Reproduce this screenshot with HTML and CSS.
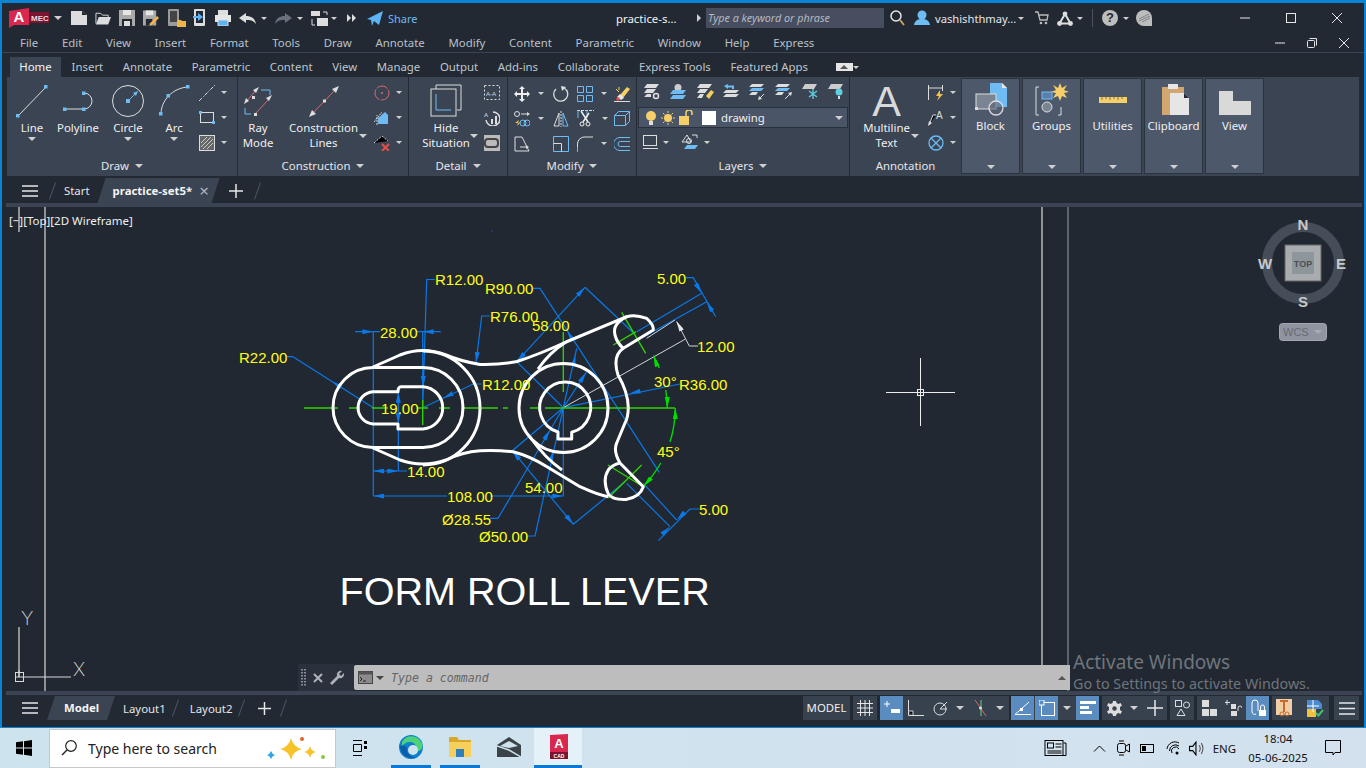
FILE: index.html
```html
<!DOCTYPE html>
<html>
  <head>
    <meta charset="utf-8">
    <title>practice-set5 - AutoCAD Mechanical</title>
    <link rel="stylesheet" href="styles.css">
  </head>
  <body>
    <div class="window">

      <!-- title bar -->
      <div class="titlebar">
        <div class="quick">
          <svg class="logo" width="40" height="20" viewBox="0 0 40 20"><path fill="#d9274f" d="M0 3 20 0V17H5L0 20z"/><rect x="20" y="4" width="20" height="11" fill="#7a1430"/><text x="10" y="14" class="logo-a">A</text><text x="22" y="12.500" class="logo-m">MEC</text></svg>
          <i class="caret caret-qa"></i>
          <svg width="16" height="14" viewBox="0 0 16 14"><path fill="#ddd" d="M0 0H11L16 4V14H0z"/><path fill="#222933" d="M11 0 16 4H11z"/></svg>
          <svg width="16" height="14" viewBox="0 0 17 14"><path fill="none" stroke="#ddd" d="M1 13V2H6L8 4H14V6"/><path fill="#ddd" d="M1 14 4 6H17L14 14z"/></svg>
          <svg width="16" height="16" viewBox="0 0 16 16"><path fill="#aaa" d="M0 0H16V16H0z"/><rect x="4" y="0" width="8" height="5" fill="#e6e6e6"/><rect x="3" y="9" width="10" height="7" fill="#222933"/><rect x="5" y="11" width="6" height="5" fill="#ddd"/></svg>
          <svg width="16" height="16" viewBox="0 0 17 16"><path fill="#aaa" d="M0 0H14V16H0z"/><rect x="3" y="0" width="8" height="5" fill="#e6e6e6"/><rect x="3" y="9" width="7" height="7" fill="#222933"/><path fill="#f0b24a" d="M7 14 15 6 17 8 9 16H7z"/></svg>
          <svg class="qa-phone" width="18" height="18" viewBox="0 0 18 18"><rect x="0" y="0" width="11" height="17" rx="1" fill="#9a9a9a"/><rect x="2" y="2" width="7" height="11" fill="#444"/><path fill="#f0b24a" d="M9 11H13L14 12H18V18H9z"/></svg>
          <svg class="qa-import" width="13" height="18" viewBox="0 0 13 18"><rect x="1" y="0" width="11" height="17" rx="1" fill="#ddd"/><rect x="3" y="2" width="7" height="12" fill="#222933"/><path fill="#5cb4f5" d="M0 7H5V4L10 8 5 12V9H0z"/></svg>
          <svg class="qa-print" width="16" height="16" viewBox="0 0 16 16"><rect x="3" y="0" width="10" height="5" fill="#ddd"/><rect x="0" y="5" width="16" height="7" fill="#e6e6e6"/><rect x="3" y="10" width="10" height="6" fill="#5cb4f5" stroke="#ddd"/></svg>
          <svg width="17" height="11" viewBox="0 0 17 11"><path fill="#ddd" d="M0 5 7 0V3C12 3 16 5 17 11 14 7 11 7 7 7V10z"/></svg>
          <i class="caret caret-sm caret-undo"></i>
          <svg width="17" height="11" viewBox="0 0 17 11"><path fill="#6a717c" d="M17 5 10 0V3C5 3 1 5 0 11 3 7 6 7 10 7V10z"/></svg>
          <i class="caret caret-sm caret-redo"></i>
          <svg width="17" height="15" viewBox="0 0 17 15"><rect x="0" y="0" width="9" height="5" fill="#ddd"/><rect x="6" y="7" width="11" height="8" fill="#ddd"/><path fill="none" stroke="#ddd" d="M12 1H16V4M1 8V14H4"/></svg>
          <i class="caret caret-sm caret-swap"></i>
          <svg class="qa-more" width="9" height="8" viewBox="0 0 9 8"><path fill="#ddd" d="M0 0 4 4 0 8zM5 0 9 4 5 8z"/></svg>
          <svg class="qa-share" width="16" height="15" viewBox="0 0 16 15"><path fill="#5cb4f5" d="M0 8 16 0 12 14 7 10 5 15 4 9z"/></svg>
          <span class="share">Share</span>
        </div>
        <span class="doc-name">practice-s...</span>
        <i class="arrow-right"></i>
        <div class="search-box">Type a keyword or phrase</div>
        <svg class="ti-search" width="15" height="16" viewBox="0 0 15 16"><circle cx="6" cy="6" r="5" fill="none" stroke="#e6e6e6" stroke-width="1.500"/><path stroke="#c9a35a" stroke-width="2" d="M10 10 14 15"/></svg>
        <svg class="ti-user" width="16" height="16" viewBox="0 0 16 16"><circle cx="8" cy="5" r="4.500" fill="#6fbcf5"/><path fill="#6fbcf5" d="M0 15C1 10 4 9 8 9S15 10 16 15z"/></svg>
        <span class="user">vashishthmay...</span>
        <i class="caret caret-sm"></i>
        <svg class="ti-cart" width="14" height="14" viewBox="0 0 14 14"><path fill="none" stroke="#bbb" stroke-width="1.300" d="M0 1H3L5 9H12L13 4H4"/><circle cx="6" cy="12" r="1.300" fill="#bbb"/><circle cx="11" cy="12" r="1.300" fill="#bbb"/></svg>
        <svg class="ti-a360" width="16" height="15" viewBox="0 0 16 15"><path fill="none" stroke="#ddd" stroke-width="2" d="M8 3 2.500 12.500H13.500z"/><circle cx="8" cy="3" r="2.400" fill="#ddd"/><circle cx="2.500" cy="12.500" r="2.400" fill="#ddd"/><circle cx="13.500" cy="12.500" r="2.400" fill="#ddd"/></svg>
        <i class="caret caret-sm"></i>
        <span class="title-sep"></span>
        <svg class="ti-help" width="16" height="16" viewBox="0 0 16 16"><circle cx="8" cy="8" r="8" fill="#bdbdbd"/><text x="8" y="12" class="help-q">?</text></svg>
        <i class="caret caret-sm"></i>
        <svg class="ti-stay" width="16" height="16" viewBox="0 0 16 16"><path fill="#bdbdbd" d="M8 0A8 8 0 0 1 16 8V16H8A8 8 0 0 1 8 0z"/><path stroke="#7d8389" fill="none" d="M3 9 13 4M3 11 14 6M6 12 14 8"/></svg>
        <div class="win-controls">
          <svg width="10" height="10" viewBox="0 0 10 10"><path stroke="#e6e6e6" d="M0 5H10"/></svg>
          <svg width="10" height="10" viewBox="0 0 10 10"><rect x=".5" y=".5" width="9" height="9" fill="none" stroke="#e6e6e6"/></svg>
          <svg width="10" height="10" viewBox="0 0 10 10"><path stroke="#e6e6e6" d="M0 0 10 10M10 0 0 10"/></svg>
        </div>
      </div>

      <!-- menu bar -->
      <div class="menubar">
        <span>File</span><span>Edit</span><span>View</span><span>Insert</span><span>Format</span><span>Tools</span><span>Draw</span><span>Annotate</span><span>Modify</span><span>Content</span><span>Parametric</span><span>Window</span><span>Help</span><span>Express</span>
        <div class="doc-controls">
          <svg width="10" height="10" viewBox="0 0 10 10"><path stroke="#e6e6e6" d="M0 5H10"/></svg>
          <svg width="10" height="10" viewBox="0 0 10 10"><rect x=".5" y="2.500" width="7" height="7" rx="1" fill="none" stroke="#e6e6e6"/><path fill="none" stroke="#e6e6e6" d="M2.500 .5H9.500V7.500"/></svg>
          <svg width="10" height="10" viewBox="0 0 10 10"><path stroke="#e6e6e6" d="M0 0 10 10M10 0 0 10"/></svg>
        </div>
      </div>

      <!-- ribbon tabs -->
      <div class="ribbon-tabs">
        <span class="tab-home">Home</span><span>Insert</span><span>Annotate</span><span>Parametric</span><span>Content</span><span>View</span><span>Manage</span><span>Output</span><span>Add-ins</span><span>Collaborate</span><span>Express Tools</span><span>Featured Apps</span>
        <span class="ribbon-min"><i class="caret-up"></i></span>
        <i class="caret caret-sm caret-min"></i>
      </div>

      <!-- ribbon -->
      <div class="ribbon">

        <div class="panel panel-draw">
          <div class="panel-body">
            <div class="big">
              <svg width="32" height="34" viewBox="0 0 32 34"><path stroke="#ddd" d="M2 32 30 3"/><rect x="0" y="30" width="3.500" height="3.500" fill="#6fbcf5"/><rect x="28" y="1" width="3.500" height="3.500" fill="#6fbcf5"/></svg>
              <span>Line</span><i class="caret"></i>
            </div>
            <div class="big">
              <svg width="34" height="34" viewBox="0 0 34 34"><path fill="none" stroke="#ddd" d="M4 25H23A8 8 0 0 0 23 9"/><rect x="2" y="23.500" width="3.500" height="3.500" fill="#6fbcf5"/><rect x="21" y="23.500" width="3.500" height="3.500" fill="#6fbcf5"/><rect x="21" y="7.500" width="3.500" height="3.500" fill="#6fbcf5"/></svg>
              <span>Polyline</span>
            </div>
            <div class="big">
              <svg width="34" height="34" viewBox="0 0 34 34"><circle cx="17" cy="17" r="15.500" fill="none" stroke="#ddd"/><path stroke="#6fbcf5" d="M17 17 25 9"/><path fill="#6fbcf5" d="M27 7 25 12 22 9z"/><rect x="15" y="15" width="4" height="4" fill="#6fbcf5"/></svg>
              <span>Circle</span><i class="caret"></i>
            </div>
            <div class="big">
              <svg width="32" height="34" viewBox="0 0 32 34"><path fill="none" stroke="#ddd" d="M3 30C3 17 14 4 30 3"/><rect x="1" y="28" width="3.500" height="3.500" fill="#6fbcf5"/><rect x="8.500" y="10" width="3.500" height="3.500" fill="#6fbcf5"/><rect x="28" y="1" width="3.500" height="3.500" fill="#6fbcf5"/></svg>
              <span>Arc</span><i class="caret"></i>
            </div>
            <div class="small-col">
              <div class="small"><svg width="16" height="16" viewBox="0 0 16 16"><path stroke="#ddd" stroke-dasharray="4 1.500 1 1.500" d="M0 16 16 0"/></svg><i class="caret caret-sm"></i></div>
              <div class="small"><svg width="16" height="13" viewBox="0 0 16 13"><rect x="1.500" y="1.500" width="13" height="10" fill="none" stroke="#ddd"/><rect x="0" y="0" width="3" height="3" fill="#6fbcf5"/><rect x="13" y="10" width="3" height="3" fill="#6fbcf5"/></svg><i class="caret caret-sm"></i></div>
              <div class="small"><svg width="16" height="16" viewBox="0 0 16 16"><rect x=".5" y=".5" width="15" height="15" fill="#666" stroke="#ddd"/><path stroke="#ccc" d="M2 8 8 2M2 12 12 2M4 14 14 4M8 14 14 8"/></svg><i class="caret caret-sm"></i></div>
            </div>
          </div>
          <div class="panel-title">Draw <i class="caret caret-title"></i></div>
        </div>

        <div class="panel panel-construction">
          <div class="panel-body">
            <div class="big">
              <svg width="30" height="34" viewBox="0 0 30 34"><path stroke="#d96a6a" d="M3 18 13 6M12 30 27 14"/><path fill="#ddd" d="M1 20 3 14 6 17zM16 3 10 6 13 9zM29 11 23 14 26 17z"/><rect x="9" y="12" width="3" height="3" fill="#ddd"/><rect x="11" y="29" width="3" height="3" fill="#ddd"/><path fill="none" stroke="#6fbcf5" d="M18 6H27V11M2 24V30H8"/></svg>
              <span>Ray<br>Mode</span>
            </div>
            <div class="big">
              <svg width="32" height="34" viewBox="0 0 32 34"><path stroke="#d96a6a" d="M3 31 30 3"/><path fill="#ddd" d="M31 2 24 5 28 9zM1 33 8 30 4 26z"/><rect x="15" y="15.500" width="3" height="3" fill="#ddd"/></svg>
              <span>Construction<br>Lines</span><i class="caret caret-side"></i>
            </div>
            <div class="small-col">
              <div class="small"><svg width="16" height="16" viewBox="0 0 16 16"><circle cx="8" cy="8" r="7" fill="none" stroke="#d96a6a" stroke-dasharray="12 1.500"/><circle cx="8" cy="8" r="1" fill="#d96a6a"/></svg><i class="caret caret-sm"></i></div>
              <div class="small"><svg width="16" height="16" viewBox="0 0 16 16"><path fill="#6fbcf5" d="M4 8 11 2 14 5V14H4z"/><path stroke="#ddd" stroke-dasharray="2 1" d="M0 12 8 2M3 15 3 5"/></svg><i class="caret caret-sm"></i></div>
              <div class="small"><svg width="16" height="16" viewBox="0 0 16 16"><path stroke="#ddd" stroke-dasharray="2 1.500" d="M0 8 8 1 14 6"/><path stroke="#e0504a" stroke-width="2" d="M8 9 15 16M15 9 8 16"/></svg><i class="caret caret-sm"></i></div>
            </div>
          </div>
          <div class="panel-title">Construction <i class="caret caret-title"></i></div>
        </div>

        <div class="panel panel-detail">
          <div class="panel-body">
            <div class="big">
              <svg width="32" height="34" viewBox="0 0 32 34"><path fill="none" stroke="#ddd" d="M6 5V1H31V26H27"/><rect x="1" y="5" width="25" height="27" fill="none" stroke="#ddd"/><path fill="none" stroke="#6fbcf5" d="M6 10V26H21"/></svg>
              <span>Hide<br>Situation</span><i class="caret caret-side"></i>
            </div>
            <div class="small-col">
              <div class="small"><svg width="16" height="15" viewBox="0 0 16 15"><rect x=".5" y=".5" width="15" height="14" fill="none" stroke="#ddd" stroke-dasharray="2 2"/><text x="2" y="11" class="ic-text">A-A</text></svg></div>
              <div class="small"><svg width="16" height="16" viewBox="0 0 16 16"><path fill="none" stroke="#ddd" stroke-width="1.500" d="M2 10A7 7 0 1 0 9 2"/><text x="0" y="7" class="ic-text">A</text><rect x="7" y="9" width="2" height="5" fill="#ddd"/><rect x="11" y="6" width="2" height="8" fill="#ddd"/></svg></div>
              <div class="small"><svg width="16" height="16" viewBox="0 0 16 16"><rect width="16" height="16" fill="#bbb"/><rect x="1" y="4" width="13" height="8" rx="3" fill="none" stroke="#444" stroke-width="2"/></svg></div>
            </div>
          </div>
          <div class="panel-title">Detail <i class="caret caret-title"></i></div>
        </div>

        <div class="panel panel-modify">
          <div class="panel-body tool-grid">
            <div class="cell"><svg width="16" height="16" viewBox="0 0 16 16"><path fill="#eee" d="M8 0 11 3H9V7H13V5L16 8 13 11V9H9V13H11L8 16 5 13H7V9H3V11L0 8 3 5V7H7V3H5z"/></svg><i class="caret caret-sm"></i></div>
            <div class="cell"><svg width="16" height="16" viewBox="0 0 16 16"><path fill="none" stroke="#ddd" stroke-width="1.300" d="M11 2A7 7 0 1 1 3 3"/><path fill="#ddd" d="M8 0 13 1 9 5z"/></svg></div>
            <div class="cell"><svg width="16" height="16" viewBox="0 0 16 16"><path fill="none" stroke="#6fbcf5" d="M.5 .5H6.500V6.500H.5zM9.500 .5H15.500V6.500H9.500zM.5 9.500H6.500V15.500H.5zM9.500 9.500H15.500V15.500H9.500z"/></svg><i class="caret caret-sm"></i></div>
            <div class="cell"><svg width="16" height="16" viewBox="0 0 16 16"><path stroke="#ddd" d="M0 15.500H16"/><path fill="#f5d060" d="M6 9 13 1 16 3 9 12z"/><path fill="#e8e8e8" d="M3 11 6 8 10 12 7 14z"/><circle cx="4" cy="13" r="1.800" fill="#e0504a"/><path stroke="#f5d060" d="M2 3 5 6M5 1 5 4"/></svg></div>

            <div class="cell"><svg width="16" height="16" viewBox="0 0 16 16"><circle cx="3" cy="3" r="2.500" fill="none" stroke="#ddd"/><path stroke="#ddd" d="M7 3H13"/><path fill="#ddd" d="M13 1 16 3 13 5z"/><path fill="#f5c04a" d="M1 12 5 9 4 12 7 11 3 15 4 12z"/><circle cx="9" cy="12" r="3" fill="none" stroke="#6fbcf5"/><circle cx="13" cy="12" r="3" fill="none" stroke="#6fbcf5"/></svg><i class="caret caret-sm"></i></div>
            <div class="cell"><svg width="16" height="16" viewBox="0 0 16 16"><path fill="none" stroke="#ddd" d="M6 2 1 15H6z"/><path fill="none" stroke="#6fbcf5" d="M10 2 15 15H10z"/><path stroke="#ddd" stroke-dasharray="2 1" d="M8 0V16"/></svg></div>
            <div class="cell"><svg width="17" height="17" viewBox="0 0 17 17"><path stroke="#ddd" stroke-dasharray="3 1" d="M0 .5H17"/><path stroke="#6fbcf5" d="M1 0V8M10 0V8"/><path stroke="#eee" stroke-width="1.500" d="M4 1 11 12M12 3 6 12"/><circle cx="5" cy="14" r="2" fill="none" stroke="#eee"/><circle cx="11" cy="14" r="2" fill="none" stroke="#eee"/></svg><i class="caret caret-sm"></i></div>
            <div class="cell"><svg width="16" height="15" viewBox="0 0 16 15"><path fill="none" stroke="#6fbcf5" d="M.5 4.500H11.500V14.500H.5zM.5 4.500 4.500 .5H15.500V10.500L11.500 14.500M11.500 4.500 15.500 .5"/></svg></div>

            <div class="cell"><svg width="16" height="16" viewBox="0 0 16 16"><path fill="none" stroke="#ddd" d="M1 1H8L15 15H1z"/><path stroke="#ddd" d="M6 11H12"/><path fill="#ddd" d="M12 9 15 11 12 13z"/></svg></div>
            <div class="cell"><svg width="16" height="16" viewBox="0 0 16 16"><path fill="none" stroke="#6fbcf5" d="M.5 .5H15.500V15.500H.5z"/><path fill="none" stroke="#ddd" d="M.5 7.500H8.500V15.500"/></svg></div>
            <div class="cell"><svg width="16" height="16" viewBox="0 0 16 16"><path fill="none" stroke="#ddd" d="M.5 16V8A7 7 0 0 1 8 1H16"/><path stroke="#6fbcf5" d="M.5 16V11"/></svg><i class="caret caret-sm"></i></div>
            <div class="cell"><svg width="16" height="14" viewBox="0 0 16 14"><path fill="none" stroke="#6fbcf5" d="M16 .5H6A6.500 6.500 0 0 0 6 13.500H16M16 4.500H6.500A2.500 2.500 0 0 0 6.500 9.500H16"/></svg></div>
          </div>
          <div class="panel-title">Modify <i class="caret caret-title"></i></div>
        </div>

        <div class="panel panel-layers">
          <div class="panel-body layers-body">
            <div class="layer-icons">
              <svg width="18" height="16" viewBox="0 0 18 16"><path fill="#ddd" d="M4 0H16L13 4H1zM4 5H13L10 9H1zM4 10H8V13H1z"/><circle cx="13" cy="12" r="2.500" fill="none" stroke="#ddd" stroke-width="1.500"/></svg>
              <svg width="18" height="16" viewBox="0 0 18 16"><circle cx="9" cy="3.500" r="3.500" fill="#ccc"/><path fill="#6fbcf5" d="M4 6H17L14 10H1zM4 11H17L14 15H1z"/></svg>
              <svg width="18" height="16" viewBox="0 0 18 16"><path fill="#ddd" d="M4 0H16L13 4H1zM4 5H12L9 9H1zM4 10H8L6 14H1z"/><path fill="#f5d060" d="M10 12 15 6 18 8 13 15z"/></svg>
              <svg width="18" height="16" viewBox="0 0 18 16"><path fill="#ddd" d="M4 6H17L14 9H1zM4 10H17L14 13H1z"/><path fill="#6fbcf5" d="M2 2 6 0V1.500H12V5H10V3.500H6V5z"/></svg>
              <svg width="18" height="16" viewBox="0 0 18 16"><path fill="#ddd" d="M4 0H16L13 3H1zM4 8H10L8 11H1z"/><path fill="#6fbcf5" d="M4 4H16L13 7H1z"/><path stroke="#ddd" d="M11 15 16 10"/><path fill="#ddd" d="M10 16 14 15 11 12z"/></svg>
              <svg width="18" height="16" viewBox="0 0 18 16"><path fill="#ddd" d="M4 0H16L13 3H1zM4 8H10L8 11H1z"/><path fill="#6fbcf5" d="M4 4H16L13 7H1z"/><path stroke="#ddd" d="M11 15 16 10"/><path fill="#ddd" d="M18 8 14 9 17 12z"/></svg>
              <svg width="18" height="16" viewBox="0 0 18 16"><path fill="#ccc" d="M4 0H16L13 5H1z"/><path stroke="#5fd0e0" stroke-width="1.300" d="M12 5V15M8 7 16 13M16 7 8 13"/></svg>
              <svg width="18" height="16" viewBox="0 0 18 16"><path fill="#ccc" d="M4 0H16L13 5H1z"/><circle cx="12" cy="8" r="3.500" fill="#5fd0e0"/><rect x="11" y="12" width="2" height="3" fill="#ddd"/></svg>
            </div>
            <div class="layer-combo">
              <svg width="12" height="14" viewBox="0 0 12 14"><circle cx="6" cy="5" r="5" fill="#f7cf6a"/><rect x="4" y="10" width="4" height="4" fill="#ddd"/></svg>
              <svg width="16" height="14" viewBox="0 0 16 14"><circle cx="8" cy="7" r="4" fill="#f7cf6a"/><path stroke="#f7cf6a" d="M8 0V2M8 12V14M1 7H3M13 7H15M3 2 4.500 3.500M13 2 11.500 3.500M3 12 4.500 10.500M13 12 11.500 10.500"/></svg>
              <svg width="14" height="15" viewBox="0 0 14 15"><rect x="0" y="6" width="10" height="9" fill="#f7cf6a"/><path fill="none" stroke="#f7cf6a" stroke-width="1.500" d="M7 6V3A3 3 0 0 1 13 3V5"/></svg>
              <span class="color-chip"></span>
              <span class="layer-name">drawing</span>
              <i class="caret caret-combo"></i>
            </div>
            <div class="layer-tools">
              <svg width="15" height="15" viewBox="0 0 15 15"><rect x=".5" y=".5" width="13" height="10" fill="none" stroke="#ddd"/><path stroke="#ddd" d="M0 13.500H15"/></svg>
              <i class="caret caret-sm"></i>
              <svg class="layer-match" width="18" height="16" viewBox="0 0 18 16"><path fill="none" stroke="#ddd" d="M6 1 1 8H10z"/><circle cx="8" cy="7" r="2.500" fill="none" stroke="#ddd"/><path fill="#6fbcf5" d="M6 11H17L14 15H3z"/><path fill="none" stroke="#ddd" d="M11 1H16V4"/></svg>
              <i class="caret caret-sm"></i>
            </div>
          </div>
          <div class="panel-title">Layers <i class="caret caret-title"></i></div>
        </div>

        <div class="panel panel-annotation">
          <div class="panel-body">
            <div class="big">
              <div class="big-a">A</div>
              <span>Multiline<br>Text</span><i class="caret caret-side"></i>
            </div>
            <div class="small-col">
              <div class="small"><svg width="16" height="16" viewBox="0 0 16 16"><path stroke="#ddd" d="M.5 0V15M14.500 0V6M0 3H15"/><path fill="#f5c04a" d="M12 5 8 11H11L9 16 15 9H12z"/></svg><i class="caret caret-sm"></i></div>
              <div class="small"><svg width="16" height="16" viewBox="0 0 16 16"><path stroke="#ddd" d="M1 15 5 5H8"/><path fill="#ddd" d="M0 16 1 11 4 13z"/><text x="8" y="9" class="ic-text-lg">A</text></svg><i class="caret caret-sm"></i></div>
              <div class="small"><svg width="16" height="16" viewBox="0 0 16 16"><circle cx="8" cy="8" r="7" fill="none" stroke="#6fbcf5" stroke-width="1.300"/><path stroke="#6fbcf5" stroke-width="1.300" d="M3 3 13 13M13 3 3 13"/></svg><i class="caret caret-sm"></i></div>
            </div>
          </div>
          <div class="panel-title">Annotation</div>
        </div>

        <div class="flat-btn">
          <svg width="32" height="34" viewBox="0 0 32 34"><path fill="#6fbcf5" d="M15 0H27L32 5V24H15z"/><path fill="#e6e6e6" d="M27 0 32 5H27z"/><rect x="1" y="11" width="20" height="15" fill="#7b8493" stroke="#ddd"/><circle cx="21" cy="25" r="7" fill="#5a6475" fill-opacity=".6" stroke="#ddd" stroke-width="1.300"/><rect x="0" y="24" width="3" height="3" fill="#ddd"/></svg>
          <span>Block</span><i class="caret"></i>
        </div>
        <div class="flat-btn">
          <svg width="34" height="34" viewBox="0 0 34 34"><path fill="none" stroke="#ddd" d="M4 4H1V32H4M23 32H26V24"/><rect x="7" y="9" width="10" height="7" fill="#5a7fa8" stroke="#6fbcf5"/><circle cx="12" cy="24" r="5" fill="#7b8493" stroke="#ddd"/><path fill="#f7cf6a" d="M25 0 27 5 32 2 29 7 34 9 29 10 32 15 27 13 25 18 23 13 18 15 21 10 16 9 21 7 18 2 23 5z"/></svg>
          <span>Groups</span><i class="caret"></i>
        </div>
        <div class="flat-btn">
          <svg width="34" height="34" viewBox="0 0 34 34"><rect x="3" y="14" width="28" height="6" fill="#f7cf6a"/><path stroke="#8a7a40" d="M6 14V17M10 14V16M14 14V17M18 14V16M22 14V17M26 14V16"/></svg>
          <span>Utilities</span><i class="caret"></i>
        </div>
        <div class="flat-btn">
          <svg width="34" height="34" viewBox="0 0 34 34"><rect x="5" y="4" width="22" height="28" fill="#d2a76f"/><rect x="11" y="1" width="10" height="5" fill="#e6e6e6"/><path fill="#e6e6e6" d="M13 10H27L32 15V32H13z"/><path fill="#222933" d="M27 10 32 15H27z"/></svg>
          <span>Clipboard</span><i class="caret"></i>
        </div>
        <div class="flat-btn">
          <svg width="34" height="34" viewBox="0 0 34 34"><path fill="#d9d9d9" d="M1 8H15V18H33V32H1z"/></svg>
          <span>View</span><i class="caret"></i>
        </div>
      </div>

      <!-- file tabs -->
      <div class="doc-tabs">
        <svg class="burger" width="16" height="12" viewBox="0 0 16 12"><path stroke="#e6e6e6" stroke-width="1.500" d="M0 1H16M0 6H16M0 11H16"/></svg>
        <i class="slash"></i>
        <span class="doc-start">Start</span>
        <div class="doc-active"><b>practice-set5*</b><span class="doc-x">×</span></div>
        <svg class="plus" width="14" height="14" viewBox="0 0 14 14"><path stroke="#e6e6e6" stroke-width="1.500" d="M7 0V14M0 7H14"/></svg>
        <i class="slash"></i>
      </div>
      <div class="split-bar"></div>

      <!-- model space -->
      <div class="viewport">
        <svg class="drawing" width="1362" height="484" viewBox="2 207 1362 484">
          <defs>
            <marker id="ab" viewBox="0 0 11 5" refX="11" refY="2.500" markerWidth="11" markerHeight="5" markerUnits="userSpaceOnUse" orient="auto"><path fill="#0a78e8" d="M0 0 11 2.500 0 5z"/></marker>
            <marker id="ag" viewBox="0 0 11 5" refX="11" refY="2.500" markerWidth="11" markerHeight="5" markerUnits="userSpaceOnUse" orient="auto"><path fill="#00e000" d="M0 0 11 2.500 0 5z"/></marker>
            <marker id="aw" viewBox="0 0 11 5" refX="11" refY="2.500" markerWidth="11" markerHeight="5" markerUnits="userSpaceOnUse" orient="auto"><path fill="#e6e6e6" d="M0 0 11 2.500 0 5z"/></marker>
          </defs>

          <!-- frame lines -->
          <path class="frame" d="M19 207V232M19 627V677M45 207V691M1042 207V665"/>
          <path class="frame-dim" d="M1068 207V691"/>

          <!-- ucs icon -->
          <path class="ucs" d="M15 677H71M19 677V670"/>
          <rect class="ucs" x="15.500" y="672.500" width="8" height="9"/>
          <text class="ucs-label" x="21" y="625">Y</text>
          <text class="ucs-label" x="73" y="676">X</text>

          <!-- cursor -->
          <path class="cursor" d="M920.500 358V426M886 392.500H955"/>
          <rect class="cursor" x="917.500" y="389.500" width="6" height="6"/>
          <circle cx="492" cy="231" r=".6" fill="#0a78e8"/>

          <!-- dimensions -->
          <path class="dim" d="M435 279.500H426.700L422.700 408M355 331.700H380M416.700 331.700H440.700M373.300 331.700V496M422.700 331.700V408M293 356.700H286.700M293 356.700 373.300 407.700M490 316H481.700L476 363M481.700 384H473.300L422.700 407.700M398.300 391.700V471M373.300 471H407M373.300 496H447M490 496H563.300V408M498 518.300H490M498 518.300 563.300 407.700 586.700 371.700M526.700 536H535L563.300 407.700 576.700 348.300M680 384 563.300 407.700M532.700 288.300H540L659.300 472.300M585 287.300 516.700 361.700 563.300 407.700M585 287.300 633.300 332.700M573.300 524.300 512.300 450.700 563.300 407.700M573.300 524.300 625 481.700M686 277.700H693.300L715.700 316.700M701.700 293.300 636.700 331.700M706.700 301.700 643.300 337M699 509H690L658.300 540.700M676.700 520 643.300 483.300M670 526.700 626.700 483.300"/>
          <g class="arrows-b">
            <path d="M423.500 372 423 387"/><path d="M362 331.700H373.300"/><path d="M435 331.700H422.700"/><path d="M343 388.500 332 381.500"/><path d="M477.500 351 476 363"/><path d="M454 392.800 443 398.300"/><path d="M398.300 403V391.700"/><path d="M398.300 412V424"/><path d="M385 471H373.300"/><path d="M387 471H398.300"/><path d="M385 496H373.300"/><path d="M552 496H563.300"/><path d="M544 440 550 430"/><path d="M580 382 586 372.500"/><path d="M550.500 462 553 451"/><path d="M573 366 575.500 355"/><path d="M641 391 629.500 393.500"/><path d="M573.500 341 567 331"/><path d="M577 296 585 287.300"/><path d="M524.700 353 516.700 361.700"/><path d="M519 459 512.300 450.700"/><path d="M566.500 516 573.300 524.300"/><path d="M695.500 283 701.700 293.300"/><path d="M712.500 311.500 706.700 301.700"/><path d="M685 512 676.700 520"/><path d="M662 534.500 670 526.700"/>
          </g>
          <path class="thin-white" d="M698 346H689.300L676.700 321.700M675 320 646.700 338.300M685 339.300 563.300 407.700"/>
          <path class="arrow-w" d="M682 331 676.300 321"/>

          <!-- centre lines -->
          <path class="center" d="M304 408H338M349 408H360M372 408H388M417 408H428M439 408H450M461 408H498M503 408H508M530 408H540M545 408H675M422.700 400V425M563.300 332V392M621.700 312.300 645.700 353.300M613.300 345 636 331.700M608 465 642 486M641.700 465 608 498"/>
          <path class="center-th" d="M667.300 408A104 104 0 0 0 665.700 390M659.300 368A104 104 0 0 0 653.400 355.700M675.300 408A112 112 0 0 1 670 442M660.800 463A112 112 0 0 1 642.500 487"/>
          <path class="arrow-g" d="M667.300 396 667.300 408"/><path class="arrow-g" d="M658 368 653.400 356"/><path class="arrow-g" d="M675.300 420 675.300 408"/><path class="arrow-g" d="M651 478 643.500 486"/>

          <!-- part outline -->
          <g class="part">
            <path d="M373 367.500H423A40 40 0 0 1 423 447.500H373A40 40 0 0 1 373 367.500"/>
            <path d="M398 391.700H373A16.200 16.200 0 0 0 373 424H398V429H423A21.200 21.200 0 0 0 423 386.700H401Q398 386.700 398 391.700Z"/>
            <path d="M373 367 400 355Q423 346 446 355 460 361 480 364.500 500 365 517 361.500 540 354 566 342L626.700 316.700Q635 314 646.700 318.300 654 325 653.300 330L623.300 348.300Q612 356 618 375 628 392 628.300 407.700 628 418 625 423L616.700 443Q613 451 620 463L643.300 486.700Q640 497 626 499.500 612 500 608.300 494 602 480 608.300 470 612 465 620 463"/>
            <path d="M626.700 316.700Q612 324 615 335 617 343 623.300 348.300"/>
            <path d="M373 448 400 460Q423 468 446 460 462 452 480 450.700 498 450 513 451.700 530 456 547 466.700L580 486.700Q598 495 608.300 496.700"/>
            <path d="M423 351A57 57 0 0 1 423 465"/>
            <path d="M538 369Q550 352 566 342M530 437Q545 458 562 470"/>
            <circle cx="563.500" cy="408" r="44.500"/>
            <path d="M558 432A25.500 25.500 0 1 1 571.700 432.200V439H558Z"/>
          </g>

          <!-- dimension text -->
          <g class="dim-text">
            <text x="435" y="284.500">R12.00</text>
            <text x="485" y="293.500">R90.00</text>
            <text x="657" y="283.500">5.00</text>
            <text x="490" y="321.500">R76.00</text>
            <text x="532" y="330.500">58.00</text>
            <text x="380" y="337.500">28.00</text>
            <text x="697" y="351.500">12.00</text>
            <text x="239" y="362.500">R22.00</text>
            <text x="654" y="386.500">30°</text>
            <text x="482" y="389.500">R12.00</text>
            <text x="679" y="389.500">R36.00</text>
            <text x="381" y="413.500">19.00</text>
            <text x="657" y="456.500">45°</text>
            <text x="407" y="476.500">14.00</text>
            <text x="525" y="492.500">54.00</text>
            <text x="447" y="501.500">108.00</text>
            <text x="699" y="514.500">5.00</text>
            <text x="442" y="524.500">Ø28.55</text>
            <text x="479" y="541.500">Ø50.00</text>
          </g>
          <text class="drawing-title" x="339.500" y="605">FORM ROLL LEVER</text>

          <!-- view cube -->
          <circle class="cube-ring" cx="1303" cy="263" r="36"/>
          <rect class="cube-face" x="1285" y="245" width="36" height="36"/>
          <rect class="cube-top" x="1292" y="252" width="22" height="22"/>
          <text class="cube-top-label" x="1303" y="267">TOP</text>
          <g class="cube-dirs">
            <text x="1303" y="230">N</text>
            <text x="1341" y="269">E</text>
            <text x="1303" y="307">S</text>
            <text x="1265" y="269">W</text>
          </g>
          <rect class="wcs-pill" x="1279.500" y="323.500" width="47" height="17" rx="3"/>
          <text class="wcs-label" x="1283" y="336">WCS</text>
          <path class="wcs-caret" d="M1314 330H1322L1318 334Z"/>
        </svg>

        <div class="viewport-label">[−][Top][2D Wireframe]</div>

        <div class="command-line">
          <div class="command-tools">
            <svg width="6" height="18" viewBox="0 0 6 18"><path stroke="#8a9099" stroke-width="2" stroke-dasharray="1.500 1.500" d="M1 0V18M4 0V18"/></svg>
            <svg width="10" height="10" viewBox="0 0 10 10"><path stroke="#aeb2b8" stroke-width="2" d="M1 1 9 9M9 1 1 9"/></svg>
            <svg width="16" height="16" viewBox="0 0 16 16"><path fill="#aeb2b8" d="M1 13 8 6A4 4 0 0 1 13 1L10 4 12 6 15 3A4 4 0 0 1 10 8L3 15z"/></svg>
          </div>
          <div class="command-input">
            <svg width="15" height="13" viewBox="0 0 15 13"><rect x=".5" y=".5" width="14" height="12" fill="#8b8b8b" stroke="#444"/><rect x=".5" y=".5" width="14" height="3" fill="#555"/><path fill="none" stroke="#222" d="M2 6 4 8 2 10M5 10H8"/></svg>
            <i class="caret caret-cmd"></i>
            <span>Type a command</span>
            <i class="caret-up caret-up-cmd"></i>
          </div>
        </div>

        <div class="activate">
          <div class="activate-big">Activate Windows</div>
          <div class="activate-small">Go to Settings to activate Windows.</div>
        </div>
      </div>
      <div class="split-bar"></div>

      <!-- layouts and status -->
      <div class="status-row">
        <svg class="burger" width="16" height="12" viewBox="0 0 16 12"><path stroke="#e6e6e6" stroke-width="1.500" d="M0 1H16M0 6H16M0 11H16"/></svg>
        <div class="layout-active">Model</div>
        <span class="layout-tab">Layout1</span>
        <i class="slash slash-sm"></i>
        <span class="layout-tab layout-tab-b">Layout2</span>
        <i class="slash slash-sm"></i>
        <svg class="plus-sm" width="13" height="13" viewBox="0 0 13 13"><path stroke="#e6e6e6" stroke-width="1.500" d="M6.500 0V13M0 6.500H13"/></svg>
        <i class="slash slash-sm slash-end"></i>

        <div class="status-tools">
          <div class="st-model">MODEL</div>
          <div class="st st-24"><svg width="16" height="16" viewBox="0 0 16 16"><path stroke="#e6e6e6" d="M3.500 0V16M8 0V16M12.500 0V16M0 3.500H16M0 8H16M0 12.500H16"/></svg></div>
          <div class="st-group">
            <div class="st st-23 st-on"><svg width="16" height="14" viewBox="0 0 16 14"><path stroke="#fff" d="M3 0V6M0 3H6"/><rect x="7" y="8" width="9" height="4" fill="#fff"/></svg></div>
            <div class="st st-26"><svg width="16" height="16" viewBox="0 0 16 16"><path fill="none" stroke="#ddd" d="M.5 0V15.500H16"/><path stroke="#ddd" d="M.5 11H5V15"/></svg></div>
            <div class="st st-22"><svg width="17" height="16" viewBox="0 0 17 16"><circle cx="8" cy="9" r="6" fill="none" stroke="#ddd"/><path stroke="#ddd" d="M8 9 15 2M8 9H15"/></svg></div>
            <i class="caret caret-st"></i>
            <div class="st st-22"><svg width="15" height="16" viewBox="0 0 15 16"><path stroke="#d96a6a" d="M2 0 13 16"/><path stroke="#6fd07a" d="M8 0 8 16"/><circle cx="7.500" cy="8" r="1.500" fill="#ddd"/></svg></div>
            <i class="caret caret-st"></i>
          </div>
          <div class="st-group st-group-b">
            <div class="st st-23 st-on"><svg width="16" height="14" viewBox="0 0 16 14"><path fill="none" stroke="#fff" d="M0 13.500H16M0 13.500 14 1"/><rect x="5" y="7" width="3" height="3" fill="#fff"/></svg></div>
            <div class="st st-23 st-on"><svg width="16" height="16" viewBox="0 0 16 16"><rect x="2.500" y="2.500" width="13" height="13" fill="none" stroke="#fff"/><rect x="0" y="0" width="5" height="5" fill="#5b8cc0" stroke="#fff"/></svg></div>
            <i class="caret caret-st"></i>
            <div class="st st-23 st-on"><svg width="16" height="14" viewBox="0 0 16 14"><path fill="#fff" d="M0 0H16V3H0zM0 5H9V8H0zM0 10H12V13H0z"/></svg></div>
          </div>
          <div class="st-group">
            <div class="st st-24"><svg width="15" height="15" viewBox="0 0 15 15"><path fill="#ddd" d="M6 0H9L9.500 2 11.500 3 13.500 2 15 4.500 13 6V9L15 10.500 13.500 13 11.500 12 9.500 13 9 15H6L5.500 13 3.500 12 1.500 13 0 10.500 2 9V6L0 4.500 1.500 2 3.500 3 5.500 2z"/><circle cx="7.500" cy="7.500" r="2.200" fill="#38414e"/></svg></div>
            <i class="caret caret-st caret-st-narrow"></i>
            <div class="st st-24"><svg width="16" height="16" viewBox="0 0 16 16"><path stroke="#e6e6e6" stroke-width="1.500" d="M8 0V16M0 8H16"/></svg></div>
          </div>
          <div class="st-group">
            <div class="st st-24"><svg width="16" height="16" viewBox="0 0 16 16"><rect x="1.500" y=".5" width="6" height="6" fill="none" stroke="#ddd"/><circle cx="12.500" cy="5" r="3" fill="none" stroke="#ddd"/><path fill="none" stroke="#ddd" d="M7 9 3 15.500H11z"/></svg></div>
          </div>
          <div class="st-group">
            <div class="st st-24"><svg width="16" height="16" viewBox="0 0 16 16"><rect x="1" y="0" width="7" height="7" fill="#ddd"/><rect x="1" y="9" width="7" height="7" fill="#ddd"/><rect x="9" y="9" width="7" height="7" fill="#ddd"/></svg></div>
            <div class="st st-25"><svg width="17" height="16" viewBox="0 0 17 16"><path stroke="#ddd" d="M2 0V5M0 2.500H5"/><rect x="6" y="4" width="5" height="5" fill="#ddd"/><rect x="6" y="11" width="6" height="5" fill="#ddd"/><path fill="none" stroke="#ddd" d="M13 11V8A2 2 0 0 1 17 8"/></svg></div>
            <div class="st st-23 st-on"><svg width="16" height="18" viewBox="0 0 16 18"><path fill="none" stroke="#fff" d="M8 12V4A3 3 0 0 0 2 4V13A3 3 0 0 0 6 15"/><rect x="9" y="11" width="7" height="6" fill="#fff"/><path fill="none" stroke="#fff" d="M10.500 11V8A2 2 0 0 1 14.500 8V11"/></svg></div>
          </div>
          <div class="st-group st-group-f">
            <div class="st st-24"><svg width="16" height="18" viewBox="0 0 16 18"><rect width="16" height="16" fill="#f0cfa8"/><path stroke="#c76a2a" stroke-width="2" d="M8 1V13M4 2H12"/><circle cx="6" cy="15" r="2" fill="none" stroke="#c76a2a"/><circle cx="11" cy="15" r="2" fill="none" stroke="#c76a2a"/></svg></div>
            <div class="st st-27"><svg width="17" height="17" viewBox="0 0 17 17"><path fill="#4a8ad0" d="M0 0H11L15 4V9H0z"/><path fill="#f0c040" d="M0 9H9V17H0z"/><path fill="none" stroke="#fff" d="M0 6H12M6 0V12"/><path fill="none" stroke="#3fc070" stroke-width="2" d="M9 13 11.500 15.500 16 10"/></svg></div>
          </div>
          <div class="st st-25 st-last"><svg width="16" height="13" viewBox="0 0 16 13"><path stroke="#e6e6e6" stroke-width="1.500" d="M0 1H16M0 6.500H16M0 12H16"/></svg></div>
        </div>
      </div>
    </div>

    <!-- windows taskbar -->
    <div class="taskbar">
      <svg class="start" width="16" height="16" viewBox="0 0 16 16"><path fill="#000" d="M0 2.300 7 1.300V7.500H0zM8 1.200 16 0V7.500H8zM0 8.500H7V14.700L0 13.700zM8 8.500H16V16L8 14.800z"/></svg>
      <div class="task-search">
        <svg width="16" height="16" viewBox="0 0 16 16"><circle cx="10" cy="6" r="5.300" fill="none" stroke="#222" stroke-width="1.200"/><path stroke="#222" stroke-width="1.500" d="M6 10 1 15"/></svg>
        <span>Type here to search</span>
        <svg class="spark" width="60" height="30" viewBox="0 0 60 30"><path fill="#f7c326" d="M24 5Q26 14 35 16 26 18 24 27 22 18 13 16 22 14 24 5z"/><path fill="#f7c326" d="M43 13Q44 18 49 19 44 20 43 25 42 20 37 19 42 18 43 13z"/><path fill="#2aa5e8" d="M4 18Q5 21 8 22 5 23 4 26 3 23 0 22 3 21 4 18z"/><circle cx="35" cy="6" r="2" fill="#e2622d"/><circle cx="56" cy="24" r="2" fill="#8cc63f"/></svg>
      </div>
      <svg class="task-view" width="16" height="16" viewBox="0 0 16 16"><path fill="none" stroke="#000" d="M2 .5H11M2 15.500H11M2.500 4.500H10.500V11.500H2.500z"/><rect x="13" y="1" width="3" height="3"/><rect x="13" y="6" width="3" height="3"/></svg>
      <div class="task-app task-open"><svg width="24" height="24" viewBox="0 0 24 24"><circle cx="12" cy="12" r="12" fill="#0f7fd0"/><path fill="#4dd27a" d="M3 7C7 -1 20 -1 23.500 10 24 15 19 17 15 16 19 12 16 7 11 7 7 7 5 9 3 11z"/><circle cx="14" cy="15" r="5" fill="#cfe3ee"/><path fill="#0a5ea8" d="M1 11C1 20 10 26 19 22 13 24 7 19 8 13 6 10 3 10 1 11z"/></svg></div>
      <div class="task-app task-open"><svg width="22" height="20" viewBox="0 0 22 20"><path fill="#d9a72a" d="M0 0H8L10 3H22V8H0z"/><path fill="#f7cf5a" d="M0 5H22V20H0z"/><rect x="7" y="12" width="8" height="8" fill="#2d7fc0"/></svg></div>
      <div class="task-app"><svg width="24" height="20" viewBox="0 0 24 20"><path fill="#3b4248" d="M12 0 24 8V20H0V8z"/><path fill="#cfe3ee" d="M12 4 21 9 12 11 3 9z"/><path fill="none" stroke="#cfe3ee" stroke-width="1.500" d="M0 9 12 13 24 20"/></svg></div>
      <div class="task-app task-active"><svg width="22" height="26" viewBox="0 0 22 26"><path fill="#d9274f" d="M3 1 21 0V18H3z"/><path fill="#7a1430" d="M3 18H21V25H3z"/><text x="12" y="14" class="logo-a-task">A</text><text x="12" y="24" class="logo-cad">CAD</text></svg></div>
      <div class="tray">
        <svg width="23" height="16" viewBox="0 0 22 16"><rect x=".5" y=".5" width="18" height="15" fill="none" stroke="#000"/><path fill="none" stroke="#000" d="M19 3H21.500V15.500H3"/><rect x="3" y="3" width="6" height="5" fill="none" stroke="#000"/><path stroke="#000" d="M11 4H17M11 7H17M3 11H17M3 13H17"/></svg>
        <svg class="tray-chev" width="13" height="7" viewBox="0 0 12 7"><path fill="none" stroke="#000" d="M.5 6.500 6 1 11.500 6.500"/></svg>
        <svg class="tray-meet" width="13" height="16" viewBox="0 0 13 16"><rect x=".5" y="3.500" width="8" height="9" rx="2" fill="none" stroke="#000"/><path fill="none" stroke="#000" d="M9 6 12.500 4V12L9 10M2 1H7M2 15H7"/></svg>
        <svg class="tray-batt" width="15" height="9" viewBox="0 0 15 9"><rect x=".5" y=".5" width="13" height="8" fill="none" stroke="#000"/><rect x="2" y="2" width="4" height="5"/></svg>
        <svg class="tray-wifi" width="14" height="14" viewBox="0 0 14 14"><path fill="none" stroke="#000" d="M1 8A8 8 0 0 1 13 2M3.500 10A6 6 0 0 1 13 5M6 12A4 4 0 0 1 13 8"/><circle cx="11" cy="12" r="1.500"/></svg>
        <svg width="17" height="15" viewBox="0 0 15 14"><path fill="none" stroke="#000" d="M1 5H4L7 1V13L4 9H1z"/><path fill="none" stroke="#555" d="M10 4Q12 7 10 10M12 2Q15 7 12 12"/></svg>
        <span class="tray-lang">ENG</span>
        <div class="clock"><div>18:04</div><div>05-06-2025</div></div>
        <svg class="notif" width="16" height="16" viewBox="0 0 16 16"><path fill="none" stroke="#000" d="M.5 .5H15.500V12.500H10L8 15 8 12.500H.5z"/></svg>
      </div>
    </div>
  </body>
</html>
```

FILE: styles.css
```css
* {
  box-sizing: border-box;
}
html, body {
  margin: 0;
  width: 1366px;
  height: 768px;
  overflow: hidden;
}
body {
  font-family: "Noto Sans", "Open Sans", sans-serif;
  font-size: 11.400px;
  color: #e8e8e8;
  background: #cfe3ee;
}
svg {
  display: block;
  flex: none;
}
i {
  display: block;
  flex: none;
}

.window {
  height: 728px;
  background: #222933;
  border-top: 3px solid #0a84d6;
  border-left: 2px solid #0a84d6;
  border-right: 2px solid #0a84d6;
  border-bottom: 1px solid #0a84d6;
}

/* carets */
.caret {
  width: 0;
  height: 0;
  border-left: 4px solid transparent;
  border-right: 4px solid transparent;
  border-top: 4px solid #d0d0d0;
}
.caret-sm {
  border-left-width: 3.500px;
  border-right-width: 3.500px;
  border-top-width: 3.500px;
}
.caret-up {
  width: 0;
  height: 0;
  border-left: 4px solid transparent;
  border-right: 4px solid transparent;
  border-bottom: 4px solid #555;
}

/* title bar */
.titlebar {
  height: 30px;
  display: flex;
  align-items: center;
}
.quick {
  display: flex;
  align-items: center;
  gap: 8px;
  width: 614px;
  padding-left: 7px;
  flex: none;
}
.logo-a {
  font: bold 15px "Liberation Sans", sans-serif;
  fill: #fff;
  text-anchor: middle;
}
.logo-m {
  font: bold 8px "Liberation Sans", sans-serif;
  fill: #f0d8de;
}
.logo-a-task {
  font: bold 13px "Liberation Sans", sans-serif;
  fill: #fff;
  text-anchor: middle;
}
.logo-cad {
  font: bold 5px "Liberation Sans", sans-serif;
  fill: #fff;
  text-anchor: middle;
}
.help-q {
  font: bold 13px "Liberation Sans", sans-serif;
  fill: #222933;
  text-anchor: middle;
}
.caret-qa {
  margin: 0 1px 0 -3px;
}
.qa-phone {
  margin-left: 1px;
}
.qa-import {
  margin-left: -1px;
}
.qa-print {
  margin-left: 1px;
}
.caret-undo,
.caret-redo {
  margin-left: -3px;
}
.caret-swap {
  margin-left: -5.500px;
}
.qa-more {
  margin-left: 2.500px;
}
.qa-share {
  margin-left: 3px;
}
.share {
  margin-left: -3px;
  color: #6fb8f0;
  font-size: 11px;
}
.doc-name {
  width: 81px;
  color: #f4f4f4;
  flex: none;
}
.arrow-right {
  width: 0;
  height: 0;
  margin-right: 5px;
  border-top: 4px solid transparent;
  border-bottom: 4px solid transparent;
  border-left: 4px solid #d0d0d0;
}
.search-box {
  width: 178px;
  height: 20px;
  line-height: 20px;
  padding-left: 2px;
  background: #464e5f;
  color: #b4b9c2;
  font-size: 10.800px;
  font-style: italic;
  flex: none;
}
.ti-search {
  margin-left: 6px;
}
.ti-user {
  margin-left: 9px;
}
.user {
  margin: 0 2px 0 5px;
  color: #e4e6ea;
  font-size: 11.200px;
  white-space: nowrap;
}
.ti-cart {
  margin-left: 11px;
}
.ti-a360 {
  margin-left: 8px;
  margin-right: 4px;
}
.title-sep {
  width: 1px;
  height: 18px;
  margin: 0 9px;
  background: #4a5260;
}
.ti-help {
  margin-right: 5px;
}
.ti-stay {
  margin-left: 7px;
}
.win-controls {
  display: flex;
  gap: 36px;
  margin-left: auto;
  margin-right: 22px;
}

/* menu bar */
.menubar {
  height: 20px;
  display: flex;
  align-items: center;
  gap: 23.700px;
  padding-left: 18px;
  color: #b9c0ca;
  border-bottom: 1px solid #3b4453;
}
.doc-controls {
  display: flex;
  gap: 22px;
  margin-left: auto;
  margin-right: 15px;
}

/* ribbon tabs */
.ribbon-tabs {
  height: 24px;
  display: flex;
  align-items: flex-end;
  gap: 19.600px;
  padding-left: 8px;
  color: #bfc5ce;
}
.ribbon-tabs span {
  height: 20px;
  line-height: 20px;
}
.ribbon-tabs .tab-home {
  width: 51px;
  margin-right: -9px;
  background: #3b4453;
  color: #f4f4f4;
  text-align: center;
}
.ribbon-tabs .ribbon-min {
  width: 17px;
  height: 8px;
  margin: 0 0 6px 8px;
  background: #e6e6e6;
  display: flex;
  align-items: center;
  justify-content: center;
}
.caret-min {
  margin: 0 0 8px -19px;
}

/* ribbon */
.ribbon {
  height: 99px;
  margin: 0 5px;
  display: flex;
  background: #3b4453;
}
.panel {
  height: 99px;
  display: flex;
  flex-direction: column;
  border-right: 1px solid #252b35;
  flex: none;
}
.panel-body {
  height: 79px;
  display: grid;
  padding-top: 7px;
}
.panel-title {
  display: flex;
  align-items: center;
  justify-content: center;
  gap: 6px;
  height: 19px;
  color: #e4e6ea;
}
.panel-draw {
  width: 231px;
}
.panel-draw .panel-body {
  grid-template-columns: 50px 42px 58px 34px 46px;
}
.panel-draw .small {
  padding-left: 8px;
}
.panel-construction {
  width: 171px;
}
.panel-construction .panel-body {
  grid-template-columns: 40px 91px 39px;
}
.panel-detail {
  width: 99px;
}
.panel-detail .panel-body {
  grid-template-columns: 74px 24px;
}
.panel-modify {
  width: 129px;
}
.panel-layers {
  width: 213px;
}
.panel-annotation {
  width: 111px;
  border-right: 0;
}
.panel-annotation .panel-body {
  grid-template-columns: 73px 38px;
}
.big {
  position: relative;
  display: flex;
  flex-direction: column;
  align-items: center;
  text-align: center;
  line-height: 15px;
  color: #f0f0f0;
  white-space: nowrap;
}
.big svg {
  margin-bottom: 2px;
  height: 34px;
}
.big .caret {
  margin-top: 2px;
}
.big .caret-side {
  position: absolute;
  right: 2px;
  top: 50px;
  margin: 0;
}
.panel-detail .big .caret-side {
  right: 5px;
}
.panel-annotation .big .caret-side {
  right: 4px;
}
.small-col {
  display: flex;
  flex-direction: column;
  gap: 4px;
  margin-top: -2px;
}
.small {
  height: 21px;
  display: flex;
  align-items: center;
  gap: 6px;
  padding-left: 5px;
}
.panel-detail .small {
  padding-left: 1px;
}
.ic-text {
  font: 6px "Liberation Sans", sans-serif;
  fill: #ddd;
}
.ic-text-lg {
  font: 10px "Liberation Sans", sans-serif;
  fill: #ddd;
}
.big-a {
  height: 34px;
  margin-bottom: 2px;
  font: 43px/34px "Liberation Sans", sans-serif;
  color: #d9d9d9;
}

/* modify grid */
.tool-grid {
  grid-template-columns: 39px 24px 37px 22px;
  grid-auto-rows: 25px;
  padding-left: 6px;
  padding-top: 4px;
}
.cell {
  display: flex;
  align-items: center;
  gap: 8px;
}

/* layers */
.layers-body {
  display: flex;
  flex-direction: column;
  padding: 7px 1px 0 1px;
}
.layer-icons {
  display: flex;
  justify-content: space-between;
  height: 18px;
  padding: 0 3px 0 5px;
}
.layer-combo {
  height: 21px;
  margin-top: 5px;
  display: flex;
  align-items: center;
  gap: 3px;
  padding: 0 4px 0 6px;
  background: #4a5568;
  border: 1px solid #2a303b;
}
.color-chip {
  width: 14px;
  height: 14px;
  margin-left: 6px;
  background: #fff;
  flex: none;
}
.layer-name {
  margin-left: 2px;
  color: #f0f0f0;
}
.caret-combo {
  margin-left: auto;
}
.layer-tools {
  display: flex;
  align-items: center;
  gap: 5px;
  margin-top: 6px;
  padding-left: 5px;
}
.layer-match {
  margin-left: 7px;
}

/* flat collapsed panels */
.flat-btn {
  width: 59px;
  height: 96px;
  margin: 1px 2px 0 0;
  padding-top: 4px;
  display: flex;
  flex-direction: column;
  align-items: center;
  line-height: 15px;
  background: #4d586b;
  color: #eef0f2;
  border: 1px solid #2d333e;
  flex: none;
}
.flat-btn svg {
  margin-bottom: 1px;
}
.flat-btn .caret {
  margin-top: auto;
  margin-bottom: 4px;
}

/* file tabs */
.doc-tabs {
  height: 27px;
  padding-top: 2px;
  display: flex;
  align-items: center;
}
.burger {
  margin-left: 20px;
}
.slash {
  width: 1px;
  height: 18px;
  margin-left: 14px;
  background: #4a5260;
  transform: rotate(20deg);
}
.doc-start {
  margin-left: 11px;
  color: #e4e6ea;
}
.doc-active {
  width: 122px;
  height: 25px;
  margin-left: 8px;
  padding-left: 15px;
  display: flex;
  align-items: center;
  gap: 7px;
  background: #3b4453;
  clip-path: polygon(8px 0, 100% 0, calc(100% - 8px) 100%, 0 100%);
  color: #f4f4f4;
}
.doc-x {
  color: #aeb2b8;
  font-size: 17px;
  line-height: 1;
}
.plus {
  margin-left: 9px;
}
.split-bar {
  height: 4px;
  background: #3b4453;
  margin: 0 2px 0 4px;
}

/* model space */
.viewport {
  position: relative;
  height: 484px;
  background: #212831;
}
.drawing {
  position: absolute;
  left: 0;
  top: 0;
}
.frame {
  fill: none;
  stroke: #d8d8d8;
  stroke-width: 1.200;
}
.frame-dim {
  fill: none;
  stroke: #9a9ea3;
}
.ucs {
  fill: none;
  stroke: #d8d8d8;
}
.ucs-label {
  font: 200 19px "Inter", "Liberation Sans", sans-serif;
  fill: #d8d8d8;
}
.cursor {
  fill: none;
  stroke: #ececec;
}
.dim {
  fill: none;
  stroke: #0a78e8;
  stroke-width: 1.200;
}
.arrows-b path {
  fill: none;
  stroke: none;
  marker-end: url(#ab);
}
.thin-white {
  fill: none;
  stroke: #d0d4d8;
}
.arrow-w {
  stroke: none;
  marker-end: url(#aw);
}
.center {
  fill: none;
  stroke: #2fd000;
  stroke-width: 1.400;
}
.center-th {
  fill: none;
  stroke: #00d800;
  stroke-width: 1.400;
}
.arrow-g {
  stroke: none;
  marker-end: url(#ag);
}
.part path,
.part circle {
  fill: none;
  stroke: #fff;
  stroke-width: 3;
  stroke-linejoin: round;
}
.dim-text text {
  font: 15px "Liberation Sans", sans-serif;
  fill: #ffff14;
}
.drawing-title {
  font: 39.600px "Liberation Sans", sans-serif;
  fill: #fff;
}
.cube-ring {
  fill: none;
  stroke: #454d58;
  stroke-width: 10;
}
.cube-face {
  fill: #a8acae;
  stroke: #666;
}
.cube-top {
  fill: #8e959b;
}
.cube-top-label {
  font: bold 9px "Liberation Sans", sans-serif;
  fill: #4a4f55;
  text-anchor: middle;
}
.cube-dirs text {
  font: bold 15px "Liberation Sans", sans-serif;
  fill: #c9c9c9;
  text-anchor: middle;
}
.wcs-pill {
  fill: #8f94a0;
  stroke: #a3a7b0;
}
.wcs-label {
  font: 11px "Liberation Sans", sans-serif;
  fill: #666b75;
}
.wcs-caret {
  fill: #a8acb4;
}
.viewport-label {
  position: absolute;
  left: 7px;
  top: 7px;
  color: #f0f0f0;
  font-size: 11.500px;
  line-height: 14px;
}
.command-line {
  position: absolute;
  left: 296px;
  top: 457px;
  width: 772px;
  height: 27px;
  display: flex;
}
.command-tools {
  width: 56px;
  display: flex;
  align-items: center;
  gap: 6px;
  padding-left: 3px;
  background: #2a313c;
}
.command-input {
  flex: 1;
  margin: 1px 0;
  display: flex;
  align-items: center;
  gap: 3px;
  padding-left: 4px;
  background: #bdbdbd;
  border-radius: 2px 0 0 2px;
}
.command-input span {
  margin-left: 4px;
  font: italic 11.600px "DejaVu Sans Mono", monospace;
  color: #666;
}
.caret-cmd {
  border-top-color: #444;
}
.caret-up-cmd {
  margin-left: auto;
  margin-right: 4px;
}
.activate {
  position: absolute;
  left: 1071px;
  top: 444px;
  color: #6f757d;
  white-space: nowrap;
}
.activate-big {
  font-size: 19px;
  line-height: 22px;
}
.activate-small {
  margin-top: 2px;
  font-size: 14.300px;
  line-height: 18px;
}

/* layout tabs and status bar */
.status-row {
  height: 32px;
  padding-bottom: 6px;
  display: flex;
  align-items: center;
}
.layout-active {
  width: 68px;
  height: 24px;
  line-height: 24px;
  margin-left: 9px;
  padding-left: 17px;
  font-weight: bold;
  background: #3b4453;
  clip-path: polygon(8px 0, 100% 0, calc(100% - 8px) 100%, 0 100%);
  color: #f4f4f4;
}
.layout-tab {
  margin-left: 8px;
  color: #e4e6ea;
}
.layout-tab-b {
  margin-left: 14px;
}
.slash-sm {
  margin-left: 9px;
}
.slash-end {
  margin-left: 12px;
}
.plus-sm {
  margin-left: 16px;
}
.status-tools {
  margin-left: auto;
  margin-right: 5px;
  display: flex;
  align-items: center;
  gap: 3px;
}
.st-model {
  width: 47px;
  height: 24px;
  line-height: 24px;
  text-align: center;
  background: #38414e;
  color: #f0f0f0;
}
.st {
  height: 24px;
  display: flex;
  align-items: center;
  justify-content: center;
  background: #38414e;
}
.st-22 { width: 22px; }
.st-23 { width: 23px; }
.st-24 { width: 24px; }
.st-25 { width: 25px; }
.st-26 { width: 26px; }
.st-27 { width: 27px; }
.st-on {
  background: #5b8cc0;
}
.st-group {
  display: flex;
  align-items: center;
  height: 24px;
  background: #38414e;
}
.st-group .st {
  background: transparent;
}
.st-group .st-on {
  background: #5b8cc0;
}
.caret-st {
  margin: 0 5px;
}
.caret-st-narrow {
  margin: 0 5px 0 4px;
}
.st-group-b {
  margin-left: -1px;
}
.st-group-b .st-on + .st-on {
  margin-left: 1px;
}
.st-group-f .st + .st {
  margin-left: 6px;
}
.st-last {
  margin-left: 2px;
}

/* taskbar */
.taskbar {
  height: 40px;
  display: flex;
  align-items: center;
  background: linear-gradient(90deg, #cde4ee, #d3e1ee);
  color: #111;
}
.start {
  margin-left: 16px;
}
.task-search {
  width: 287px;
  height: 39px;
  margin-left: 17px;
  padding-left: 11px;
  display: flex;
  align-items: center;
  gap: 11px;
  background: #fff;
  border: 1px solid #c4c8cc;
  font-size: 14px;
  color: #222;
}
.spark {
  margin-left: auto;
  margin-right: 8px;
}
.task-view {
  margin-left: 15px;
  margin-right: 24px;
}
.task-app {
  width: 40px;
  height: 40px;
  margin-right: 9px;
  display: flex;
  align-items: center;
  justify-content: center;
  border-bottom: 3px solid transparent;
}
.task-open {
  border-bottom-color: #0a78d6;
}
.task-active {
  width: 48px;
  margin-left: -4px;
  background: #e4f1f8;
  border-bottom-color: #0a78d6;
}
.tray {
  margin-left: auto;
  display: flex;
  align-items: center;
  gap: 8px;
  padding-right: 25px;
}
.tray-chev {
  margin-left: 18px;
}
.tray-meet {
  margin-left: 3px;
}
.tray-batt {
  margin-left: 2px;
}
.tray-wifi {
  margin-left: 3px;
}
.tray-lang {
  margin-left: 0;
}
.clock {
  margin-left: 2px;
  width: 64px;
  text-align: center;
  line-height: 19px;
}
.notif {
  margin-left: 7px;
}
```
